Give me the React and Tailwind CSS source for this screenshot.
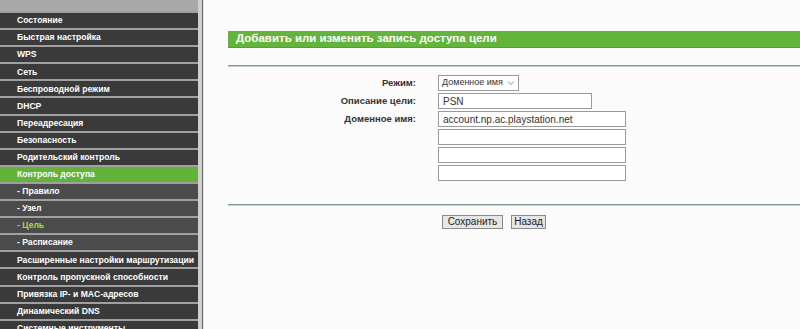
import React from "react";

const items = [
  { t: "Состояние" },
  { t: "Быстрая настройка" },
  { t: "WPS" },
  { t: "Сеть" },
  { t: "Беспроводной режим" },
  { t: "DHCP" },
  { t: "Переадресация" },
  { t: "Безопасность" },
  { t: "Родительский контроль" },
  { t: "Контроль доступа", active: true },
  { t: "- Правило", sub: true },
  { t: "- Узел", sub: true },
  { t: "- Цель", sub: true, cur: true },
  { t: "- Расписание", sub: true },
  { t: "Расширенные настройки маршрутизации" },
  { t: "Контроль пропускной способности" },
  { t: "Привязка IP- и MAC-адресов" },
  { t: "Динамический DNS" },
  { t: "Системные инструменты" },
];

export default function App() {
  return (
    <div
      className="flex h-[329px] w-[800px] overflow-hidden bg-[#fbfbfb]"
      style={{ fontFamily: '"Liberation Sans", Arial, sans-serif' }}
    >
      <div className="flex w-[198px] shrink-0 flex-col bg-[#a3a3a3]">
        <div className="h-[11px] shrink-0 bg-[#a9a9a9]" />
        {items.map((it, i) => (
          <div
            key={i}
            className={
              "flex h-[17.1px] shrink-0 items-center whitespace-nowrap border-t-2 border-[#a0a0a0] pl-[17px] text-[8.6px] font-bold leading-none " +
              (it.active
                ? "bg-[#63b33a] text-white"
                : it.sub
                ? "bg-[#4b4b4b] " + (it.cur ? "text-[#a8dc45]" : "text-white")
                : "bg-[#3a3a3a] text-white")
            }
          >
            {it.t}
          </div>
        ))}
      </div>
      <div className="w-[4px] shrink-0 bg-[#cfcfcf]" />
      <div className="w-[1px] shrink-0 bg-[#6e6e6e]" />
      <div className="w-[1px] shrink-0 bg-[#e2e2e2]" />
      <div className="flex-1 pl-[24px] pt-[31px]">
        <div className="flex h-[17px] items-center border-b border-[#5a9c3a] bg-[#63b43a] pl-[8px] text-[11.5px] font-bold text-white">
          Добавить или изменить запись доступа цели
        </div>
        <div className="mt-[17px] h-[2px] border-t border-[#7f9b8e] bg-[#c3d3cb]" />
        <div className="mt-[8px] flex flex-col gap-[2px] pl-[0px]">
          <Row label="Режим:">
            <div className="flex h-[16px] w-[81px] items-center justify-between whitespace-nowrap border border-[#9a9a9a] bg-white pl-[3px] pr-[3px] text-[9px] text-[#333]">
              <span>Доменное имя</span>
              <svg width="8" height="6" viewBox="0 0 8 6">
                <path d="M1 1.5 L4 4.5 L7 1.5" fill="none" stroke="#888" strokeWidth="1" />
              </svg>
            </div>
          </Row>
          <Row label="Описание цели:">
            <Input w="w-[154px]" v="PSN" />
          </Row>
          <Row label="Доменное имя:">
            <Input w="w-[188px]" v="account.np.ac.playstation.net" />
          </Row>
          <Row label="">
            <Input w="w-[188px]" v="" />
          </Row>
          <Row label="">
            <Input w="w-[188px]" v="" />
          </Row>
          <Row label="">
            <Input w="w-[188px]" v="" />
          </Row>
        </div>
        <div className="mt-[23px] h-[2px] border-t border-[#7f9b8e] bg-[#c3d3cb]" />
        <div className="mt-[9px] flex gap-[8px] pl-[214px]">
          <button className="h-[14px] w-[61px] border border-[#8a8a8a] bg-[#e6e6e6] text-[10px] leading-none text-[#222]">
            Сохранить
          </button>
          <button className="h-[14px] w-[35px] border border-[#8a8a8a] bg-[#e6e6e6] text-[10px] leading-none text-[#222]">
            Назад
          </button>
        </div>
      </div>
    </div>
  );
}

function Row({ label, children }) {
  return (
    <div className="flex items-center">
      <div className="w-[188px] whitespace-nowrap text-right text-[9.5px] font-bold text-[#333]">{label}</div>
      <div className="ml-[22px]">{children}</div>
    </div>
  );
}

function Input({ w, v }) {
  return (
    <div className={"flex h-[16px] items-center whitespace-nowrap border border-[#9a9a9a] bg-white pl-[4px] text-[10px] text-[#333] " + w}>
      {v}
    </div>
  );
}
